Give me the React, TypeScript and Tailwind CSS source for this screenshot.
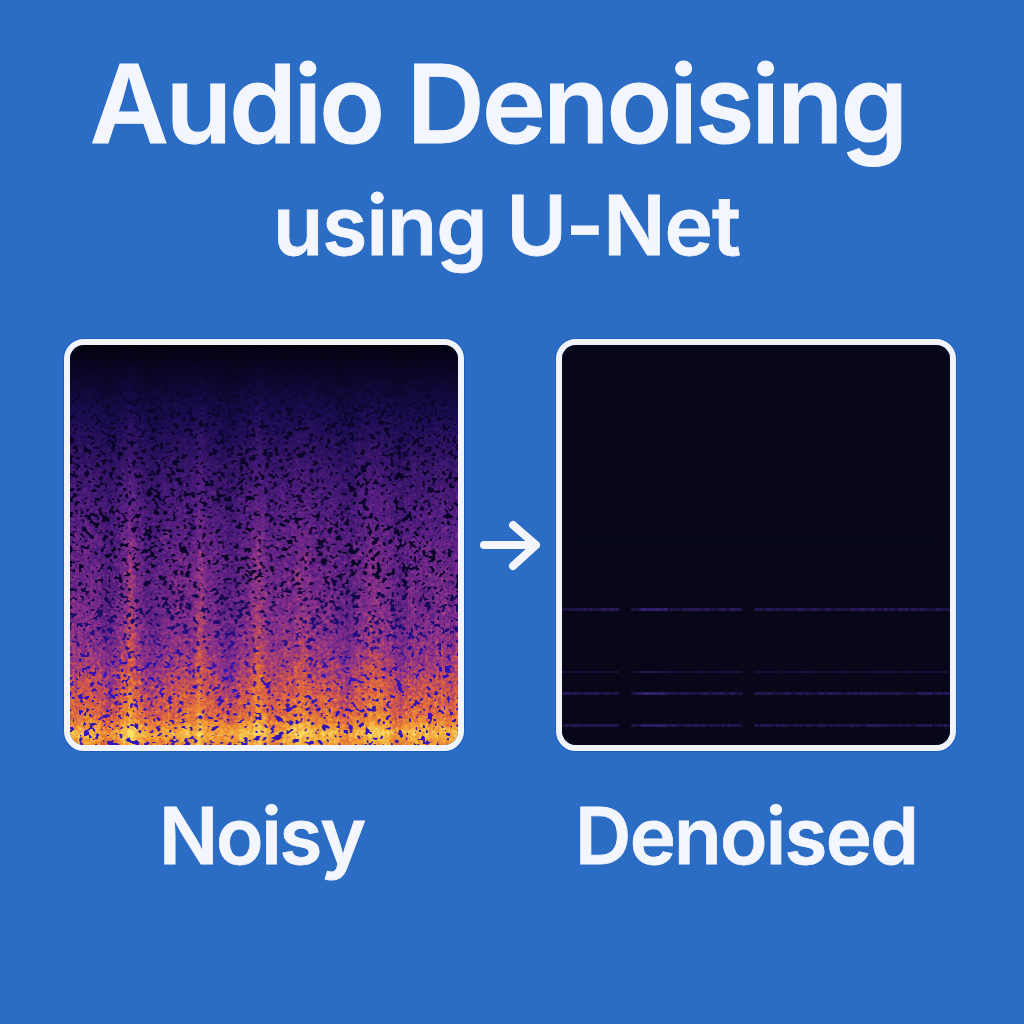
import { useEffect, useRef } from "react";

const STOPS: [number, number, number, number][] = [
  [0, 2, 2, 12],
  [0.15, 25, 12, 80],
  [0.35, 85, 30, 130],
  [0.5, 140, 50, 140],
  [0.65, 215, 90, 70],
  [0.8, 240, 150, 50],
  [1, 250, 230, 100],
];

// brightness against height, read off the reference
const CURVE: [number, number][] = [
  [0, 0.01],
  [0.08, 0.07],
  [0.2, 0.17],
  [0.35, 0.29],
  [0.5, 0.38],
  [0.65, 0.44],
  [0.75, 0.5],
  [0.85, 0.6],
  [0.93, 0.68],
  [0.97, 0.84],
  [1, 0.74],
];

const STREAKS: [number, number, number][] = [
  [0.155, 0.012, 0.09],
  [0.335, 0.008, 0.1],
  [0.483, 0.012, 0.1],
  [0.6, 0.025, 0.05],
  [0.785, 0.02, 0.05],
  [0.1, 0.018, -0.07],
  [0.215, 0.02, -0.07],
  [0.405, 0.018, -0.08],
  [0.71, 0.016, -0.06],
  [0.85, 0.014, -0.05],
];

function makeRandom(seed: number) {
  let s = seed;
  return () => {
    s = (s * 1664525 + 1013904223) >>> 0;
    return s / 4294967296;
  };
}

function colormap(t: number) {
  const v = Math.max(0, Math.min(1, t));
  for (let i = 1; i < STOPS.length; i++) {
    const [b, r2, g2, b2] = STOPS[i];
    const [a, r1, g1, b1] = STOPS[i - 1];
    if (v <= b) {
      const k = (v - a) / (b - a);
      return [r1 + (r2 - r1) * k, g1 + (g2 - g1) * k, b1 + (b2 - b1) * k];
    }
  }
  return [250, 230, 100];
}

function curveAt(fy: number) {
  for (let i = 1; i < CURVE.length; i++) {
    const [b, vb] = CURVE[i];
    const [a, va] = CURVE[i - 1];
    if (fy <= b) return va + ((vb - va) * (fy - a)) / (b - a);
  }
  return 0.74;
}

const KERNEL = [1, 2, 1];

function soften(src: Float32Array, w: number, h: number) {
  const out = new Float32Array(w * h);
  for (let y = 0; y < h; y++) {
    for (let x = 0; x < w; x++) {
      let sum = 0;
      let n = 0;
      for (let dy = -1; dy <= 1; dy++) {
        for (let dx = -1; dx <= 1; dx++) {
          const yy = y + dy;
          const xx = x + dx;
          if (yy < 0 || xx < 0 || yy >= h || xx >= w) continue;
          const weight = KERNEL[dy + 1] * KERNEL[dx + 1];
          sum += src[yy * w + xx] * weight;
          n += weight;
        }
      }
      out[y * w + x] = sum / n;
    }
  }
  return out;
}

function drawNoisy(canvas: HTMLCanvasElement) {
  const ctx = canvas.getContext("2d");
  if (!ctx) return;
  const w = canvas.width;
  const h = canvas.height;
  const rand = makeRandom(7);
  const raw = new Float32Array(w * h).map(() => rand());
  const blob = soften(soften(raw, w, h), w, h);
  const grain = soften(new Float32Array(w * h).map(() => rand()), w, h);
  const columns = Array.from({ length: w }, () => rand() * 0.05 - 0.025);
  const lumps = Array.from({ length: 40 }, () => rand());
  const img = ctx.createImageData(w, h);
  for (let y = 0; y < h; y++) {
    const fy = y / h;
    for (let x = 0; x < w; x++) {
      const fx = x / w;
      let streak = 0;
      for (const [cx, sd, amp] of STREAKS) {
        streak += amp * Math.exp(-((fx - cx) ** 2) / (2 * sd * sd));
      }
      const lump = lumps[Math.floor(fx * 39)] * 0.08 * Math.min(1, Math.max(0, fy - 0.8) * 6);
      let t = curveAt(fy) + lump;
      t += (streak + columns[x]) * Math.min(1, fy * 1.6);
      t += (grain[y * w + x] - 0.5) * 0.35 * Math.min(1, fy * 2);
      const c = colormap(t);
      // soft edged specks: dark in the upper part, blue over the orange part
      const thr = fy > 0.72 ? 0.42 : 0.435;
      const k = Math.max(0, Math.min(1, (thr - blob[y * w + x]) / 0.02)) * Math.min(1, fy * 5);
      const mix = fy > 0.82 ? 1 : Math.max(0, (fy - 0.57) / 0.25);
      const speck = [10 + 40 * mix, 5 + 15 * mix, 40 + 147 * mix];
      const i = (y * w + x) * 4;
      img.data[i] = c[0] + (speck[0] - c[0]) * k;
      img.data[i + 1] = c[1] + (speck[1] - c[1]) * k;
      img.data[i + 2] = c[2] + (speck[2] - c[2]) * k;
      img.data[i + 3] = 255;
    }
  }
  ctx.putImageData(img, 0, 0);
}

// y offset inside the panel, thickness, opacity of each leftover band
const BANDS: [number, number, number][] = [
  [263, 3, 1],
  [326, 2, 0.6],
  [347, 3, 0.9],
  [379, 3, 0.9],
];

function drawDenoised(canvas: HTMLCanvasElement) {
  const ctx = canvas.getContext("2d");
  if (!ctx) return;
  const rand = makeRandom(21);
  ctx.fillStyle = "#070719";
  ctx.fillRect(0, 0, canvas.width, canvas.height);
  ctx.fillStyle = "#0a0a22";
  ctx.fillRect(8, 196, 370, 1);
  for (const [y, thick, alpha] of BANDS) {
    for (let x = 0; x < canvas.width; x += 3) {
      const gap = (x > 55 && x < 68) || (x > 178 && x < 190);
      if (gap) continue;
      const glow = x > 75 && x < 105 ? 0.25 : 0;
      ctx.fillStyle = `rgba(66,40,135,${(0.3 + rand() * 0.35 + glow) * alpha})`;
      ctx.fillRect(x, y, 3, thick);
    }
  }
}

function SpecCanvas({ draw }: { draw: (c: HTMLCanvasElement) => void }) {
  const ref = useRef<HTMLCanvasElement>(null);
  useEffect(() => {
    if (ref.current) draw(ref.current);
  }, [draw]);
  return <canvas ref={ref} width={387} height={400} className="block w-full h-full" />;
}

function Panel({ draw }: { draw: (c: HTMLCanvasElement) => void }) {
  return (
    <div className="w-[400px] h-[412px] rounded-[20px] border-[6px] border-[#f1f4fa] overflow-hidden shadow-[0_0_0_1px_#1d5fbd]">
      <SpecCanvas draw={draw} />
    </div>
  );
}

export default function App() {
  return (
    <div
      className="w-[1024px] h-[1024px] bg-[#2b6cc4] text-[#f3f6fc] overflow-hidden flex flex-col [text-shadow:0_0_1px_#1d5fbd]"
      style={{ fontFamily: "Inter, 'Liberation Sans', sans-serif" }}
    >
      <h1 className="mt-[44px] h-[120px] leading-[120px] pl-[90px] text-[108px] font-semibold tracking-[-2.75px] whitespace-nowrap [-webkit-text-stroke:1px_#f3f6fc]">
        Audio Denoising
      </h1>
      <h2 className="mt-[12px] h-[100px] leading-[100px] pl-[273px] text-[82px] font-semibold tracking-[-0.9px] whitespace-nowrap [-webkit-text-stroke:0.8px_#f3f6fc]">
        using U-Net
      </h2>
      <div className="mt-[63px] pl-[64px] flex items-center">
        <Panel draw={drawNoisy} />
        <div className="w-[92px] flex justify-center">
          <svg width="64" height="52" viewBox="0 0 64 52" fill="none" stroke="currentColor" strokeWidth="8" strokeLinecap="round" strokeLinejoin="round">
            <path d="M6 26H58M35 6L58 26L35 47" />
          </svg>
        </div>
        <Panel draw={drawDenoised} />
      </div>
      <div className="mt-[40px] flex font-semibold text-[78px] leading-[90px] [-webkit-text-stroke:0.8px_#f3f6fc]">
        <span className="ml-[159px] w-[416px] tracking-[-2.2px]">Noisy</span>
        <span className="tracking-[-1.7px]">Denoised</span>
      </div>
    </div>
  );
}
